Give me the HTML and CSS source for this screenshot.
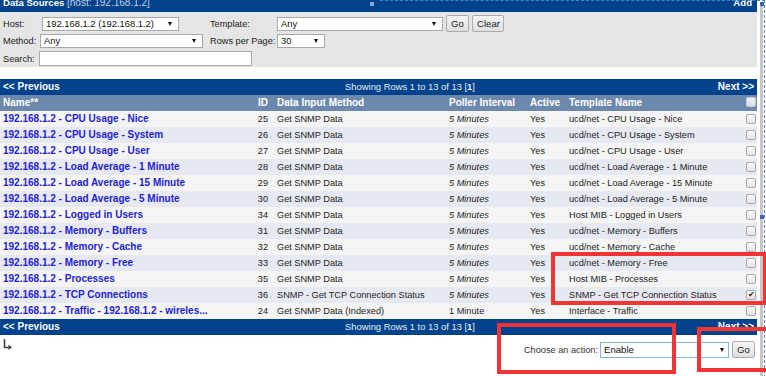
FILE: index.html
```html
<!DOCTYPE html>
<html lang="en">
<head>
    <meta charset="UTF-8">
    <meta name="viewport" content="width=device-width, initial-scale=1.0">
    <title>Data Sources</title>
    <link rel="stylesheet" href="styles.css">
</head>
<body>
    <div class="page">
        <div class="box-head">
            <div class="box-title"><strong>Data Sources</strong> <span class="host">[host: 192.168.1.2]</span></div>
            <a class="add">Add</a>
        </div>

        <div class="filter">
            <div class="frow">
                <label class="lbl lbl-host">Host:</label>
                <span class="sel sel-host"><select><option>192.168.1.2 (192.168.1.2)</option></select></span>
                <label class="lbl lbl-right">Template:</label>
                <span class="sel sel-tpl"><select><option>Any</option></select></span>
                <button class="btn btn-go">Go</button>
                <button class="btn btn-clear">Clear</button>
            </div>
            <div class="frow">
                <label class="lbl lbl-method">Method:</label>
                <span class="sel sel-method"><select><option>Any</option></select></span>
                <label class="lbl lbl-right lbl-rows">Rows per Page:</label>
                <span class="sel sel-rows"><select><option>30</option></select></span>
            </div>
            <div class="frow">
                <label class="lbl lbl-search">Search:</label>
                <input type="text" class="search">
            </div>
        </div>

        <div class="listing">
            <div class="nav">
                <span class="nav-prev">&lt;&lt; Previous</span>
                <span class="nav-mid">Showing Rows 1 to 13 of 13 [<b>1</b>]</span>
                <span class="nav-next">Next &gt;&gt;</span>
            </div>
            <table class="ds">
                <colgroup>
                    <col class="c-name">
                    <col class="c-id">
                    <col class="c-method">
                    <col class="c-poll">
                    <col class="c-active">
                    <col class="c-tpl">
                    <col class="c-cb">
                </colgroup>
                <thead>
                    <tr>
                        <th>Name**</th>
                        <th class="num">ID</th>
                        <th>Data Input Method</th>
                        <th>Poller Interval</th>
                        <th>Active</th>
                        <th>Template Name</th>
                        <th><span class="cb cb-head"></span></th>
                    </tr>
                </thead>
                <tbody>
                    <tr><td><a>192.168.1.2 - CPU Usage - Nice</a></td><td class="num">25</td><td>Get SNMP Data</td><td class="poll">5 Minutes</td><td>Yes</td><td>ucd/net - CPU Usage - Nice</td><td><span class="cb"></span></td></tr>
                    <tr><td><a>192.168.1.2 - CPU Usage - System</a></td><td class="num">26</td><td>Get SNMP Data</td><td class="poll">5 Minutes</td><td>Yes</td><td>ucd/net - CPU Usage - System</td><td><span class="cb"></span></td></tr>
                    <tr><td><a>192.168.1.2 - CPU Usage - User</a></td><td class="num">27</td><td>Get SNMP Data</td><td class="poll">5 Minutes</td><td>Yes</td><td>ucd/net - CPU Usage - User</td><td><span class="cb"></span></td></tr>
                    <tr><td><a>192.168.1.2 - Load Average - 1 Minute</a></td><td class="num">28</td><td>Get SNMP Data</td><td class="poll">5 Minutes</td><td>Yes</td><td>ucd/net - Load Average - 1 Minute</td><td><span class="cb"></span></td></tr>
                    <tr><td><a>192.168.1.2 - Load Average - 15 Minute</a></td><td class="num">29</td><td>Get SNMP Data</td><td class="poll">5 Minutes</td><td>Yes</td><td>ucd/net - Load Average - 15 Minute</td><td><span class="cb"></span></td></tr>
                    <tr><td><a>192.168.1.2 - Load Average - 5 Minute</a></td><td class="num">30</td><td>Get SNMP Data</td><td class="poll">5 Minutes</td><td>Yes</td><td>ucd/net - Load Average - 5 Minute</td><td><span class="cb"></span></td></tr>
                    <tr><td><a>192.168.1.2 - Logged in Users</a></td><td class="num">34</td><td>Get SNMP Data</td><td class="poll">5 Minutes</td><td>Yes</td><td>Host MIB - Logged in Users</td><td><span class="cb"></span></td></tr>
                    <tr><td><a>192.168.1.2 - Memory - Buffers</a></td><td class="num">31</td><td>Get SNMP Data</td><td class="poll">5 Minutes</td><td>Yes</td><td>ucd/net - Memory - Buffers</td><td><span class="cb"></span></td></tr>
                    <tr><td><a>192.168.1.2 - Memory - Cache</a></td><td class="num">32</td><td>Get SNMP Data</td><td class="poll">5 Minutes</td><td>Yes</td><td>ucd/net - Memory - Cache</td><td><span class="cb"></span></td></tr>
                    <tr><td><a>192.168.1.2 - Memory - Free</a></td><td class="num">33</td><td>Get SNMP Data</td><td class="poll">5 Minutes</td><td>Yes</td><td>ucd/net - Memory - Free</td><td><span class="cb"></span></td></tr>
                    <tr><td><a>192.168.1.2 - Processes</a></td><td class="num">35</td><td>Get SNMP Data</td><td class="poll">5 Minutes</td><td>Yes</td><td>Host MIB - Processes</td><td><span class="cb"></span></td></tr>
                    <tr><td><a>192.168.1.2 - TCP Connections</a></td><td class="num">36</td><td>SNMP - Get TCP Connection Status</td><td class="poll">5 Minutes</td><td>Yes</td><td>SNMP - Get TCP Connection Status</td><td><span class="cb checked">&#10004;</span></td></tr>
                    <tr><td><a>192.168.1.2 - Traffic - 192.168.1.2 - wireles...</a></td><td class="num">24</td><td>Get SNMP Data (Indexed)</td><td>1 Minute</td><td>Yes</td><td>Interface - Traffic</td><td><span class="cb"></span></td></tr>
                </tbody>
            </table>
            <div class="nav">
                <span class="nav-prev">&lt;&lt; Previous</span>
                <span class="nav-mid">Showing Rows 1 to 13 of 13 [<b>1</b>]</span>
                <span class="nav-next">Next &gt;&gt;</span>
            </div>
        </div>

        <div class="actions">
            <svg class="arrow" width="10" height="11" viewBox="0 0 10 11">
                <path d="M1.5 0 V8.5 H6" fill="none" stroke="#444" stroke-width="1.6"/>
                <path d="M5.5 5.5 L9 8.5 L5.5 11 Z" fill="#444"/>
            </svg>
            <div class="action-pick">
                <span class="action-label">Choose an action:</span>
                <span class="sel sel-action"><select><option>Enable</option></select></span>
                <button class="btn btn-action">Go</button>
            </div>
        </div>
    </div>

    <div class="scroll-edge"></div>
    <div class="sel-frame"></div>
    <span class="handle handle-top"></span>
    <span class="handle handle-corner"></span>
    <span class="handle handle-side"></span>

    <div class="mark mark-rows"></div>
    <div class="mark mark-action"></div>
    <div class="mark mark-go"></div>
</body>
</html>
```

FILE: styles.css
```css
body {
    margin: 0;
    width: 766px;
    height: 376px;
    overflow: hidden;
    position: relative;
    background: #fff;
    font-family: "Liberation Sans", Arial, sans-serif;
    font-size: 9.2px;
    color: #222;
}
.page {
    width: 757px;
}
.box-head {
    height: 12px;
    overflow: hidden;
    background: #00438c;
    color: #fff;
    display: flex;
    justify-content: space-between;
    align-items: flex-start;
    padding: 0 5px 0 3px;
}
.box-title {
    line-height: 14px;
    margin-top: -4px;
    font-size: 9.6px;
}
.host {
    font-size: 10px;
    color: #c9d3e6;
}
.add {
    line-height: 14px;
    margin-top: -4px;
    font-weight: bold;
    font-size: 9.6px;
}
.filter {
    background: #e5e5e5;
    height: 52px;
    padding-top: 3px;
}
.frow {
    display: flex;
    align-items: center;
    height: 17px;
}
.lbl {
    padding-left: 3px;
    box-sizing: border-box;
}
.lbl-host { width: 42px; }
.lbl-method { width: 40px; }
.lbl-search { width: 39px; }
.lbl-right {
    padding-left: 0;
    width: 67px;
}
.sel-host { width: 137px; margin-right: 31px; }
.sel-method { width: 163px; margin-right: 7px; }
.sel-tpl { width: 166px; }
.sel-rows { width: 48px; }
.sel {
    position: relative;
    display: inline-block;
    height: 14px;
}
.sel select {
    appearance: none;
    -webkit-appearance: none;
    width: 100%;
    height: 100%;
    box-sizing: border-box;
    border: 1px solid #a9a9a9;
    border-radius: 0;
    background: #fff;
    font-family: inherit;
    font-size: 9.4px;
    color: #111;
    padding: 0 0 0 3px;
    margin: 0;
}
.sel::after {
    content: "";
    position: absolute;
    right: 7px;
    top: 5px;
    border-left: 2.5px solid transparent;
    border-right: 2.5px solid transparent;
    border-top: 4px solid #111;
}
.btn {
    font-family: inherit;
    font-size: 9.6px;
    color: #222;
    height: 17px;
    padding: 0 4px;
    margin: 0 0 0 3px;
    border: 1px solid #acacac;
    border-radius: 2px;
    background: linear-gradient(#f6f6f6, #dedede);
}
.btn-go { width: 23px; }
.btn-clear { width: 32px; }
.search {
    width: 213px;
    height: 15px;
    box-sizing: border-box;
    border: 1px solid #a9a9a9;
    background: #fff;
    margin: 0;
    padding: 0 3px;
}
.filter .frow:nth-child(3) {
    margin-top: 1px;
}
.listing {
    margin-top: 12px;
}
.nav {
    display: flex;
    height: 16px;
    line-height: 16px;
    background: #00438c;
    color: #fff;
}
.nav-prev {
    width: 157px;
    padding-left: 3px;
    font-weight: bold;
    font-size: 10px;
}
.nav-mid {
    flex: 1;
    text-align: center;
    font-size: 9.4px;
    color: #e8edf5;
}
.nav-next {
    width: 94px;
    padding-right: 3px;
    text-align: right;
    font-weight: bold;
    font-size: 10px;
}
.ds {
    width: 757px;
    table-layout: fixed;
    border-collapse: collapse;
}
.c-name { width: 226px; }
.c-id { width: 48px; }
.c-method { width: 172px; }
.c-poll { width: 81px; }
.c-active { width: 39px; }
.c-tpl { width: 177px; }
.c-cb { width: 14px; }
.ds th, .ds td {
    height: 16px;
    padding: 0 0 0 3px;
    line-height: 16px;
    white-space: nowrap;
    overflow: hidden;
    text-align: left;
}
.ds th {
    background: #6d88ad;
    color: #fff;
    font-size: 10px;
}
.ds td {
    background: #f5f5f5;
}
.ds tbody tr:nth-child(even) td {
    background: #e7e9f2;
}
.ds th.num, .ds td.num {
    text-align: right;
    padding: 0 6px 0 0;
}
.ds td.poll {
    font-style: italic;
}
.ds a {
    color: #2222d4;
    font-weight: bold;
    font-size: 10px;
}
.cb {
    display: inline-block;
    vertical-align: middle;
    width: 8px;
    height: 8px;
    margin-top: -2px;
    border: 1px solid #ababab;
    border-radius: 2px;
    background: linear-gradient(#fafafa, #e4e4e4);
    font-size: 8px;
    line-height: 8px;
    text-align: center;
    color: #222;
}
.cb-head {
    border-color: #c4cbd8;
    background: linear-gradient(#f0f2f6, #d6dbe5);
}
.actions {
    display: flex;
    justify-content: space-between;
    align-items: flex-start;
    padding: 0 2px 0 3px;
}
.arrow {
    margin-top: 4px;
}
.action-pick {
    display: flex;
    align-items: center;
    margin-top: 6px;
}
.action-label {
    color: #333;
    margin-right: 2px;
}
.sel-action {
    width: 129px;
    height: 16px;
}
.sel-action select {
    border-color: #7eb4ea;
    font-size: 9.6px;
}
.sel-action::after {
    top: 6px;
    right: 5px;
}
.btn-action {
    width: 23px;
    height: 17px;
}
.scroll-edge {
    position: absolute;
    left: 760px;
    top: 5px;
    width: 3px;
    bottom: 0;
    background: #c6c6c6;
}
.sel-frame {
    position: absolute;
    left: 380px;
    top: 0;
    right: 1px;
    bottom: -2px;
    border-top: 1px dashed #4d7fd0;
    border-right: 1px dashed #4d7fd0;
}
.handle {
    position: absolute;
    width: 4px;
    height: 4px;
    background: #3b67ad;
}
.handle-top {
    left: 370px;
    top: 2px;
    background: #8fa6cf;
}
.handle-corner {
    left: 760px;
    top: 2px;
}
.handle-side {
    left: 760px;
    top: 215px;
}
.mark {
    position: absolute;
    border: 4px solid #f23434;
    box-sizing: border-box;
}
.mark-rows {
    left: 551px;
    top: 252px;
    width: 216px;
    height: 53px;
}
.mark-action {
    left: 497px;
    top: 323px;
    width: 179px;
    height: 51px;
}
.mark-go {
    left: 697px;
    top: 327px;
    width: 80px;
    height: 45px;
}
```
